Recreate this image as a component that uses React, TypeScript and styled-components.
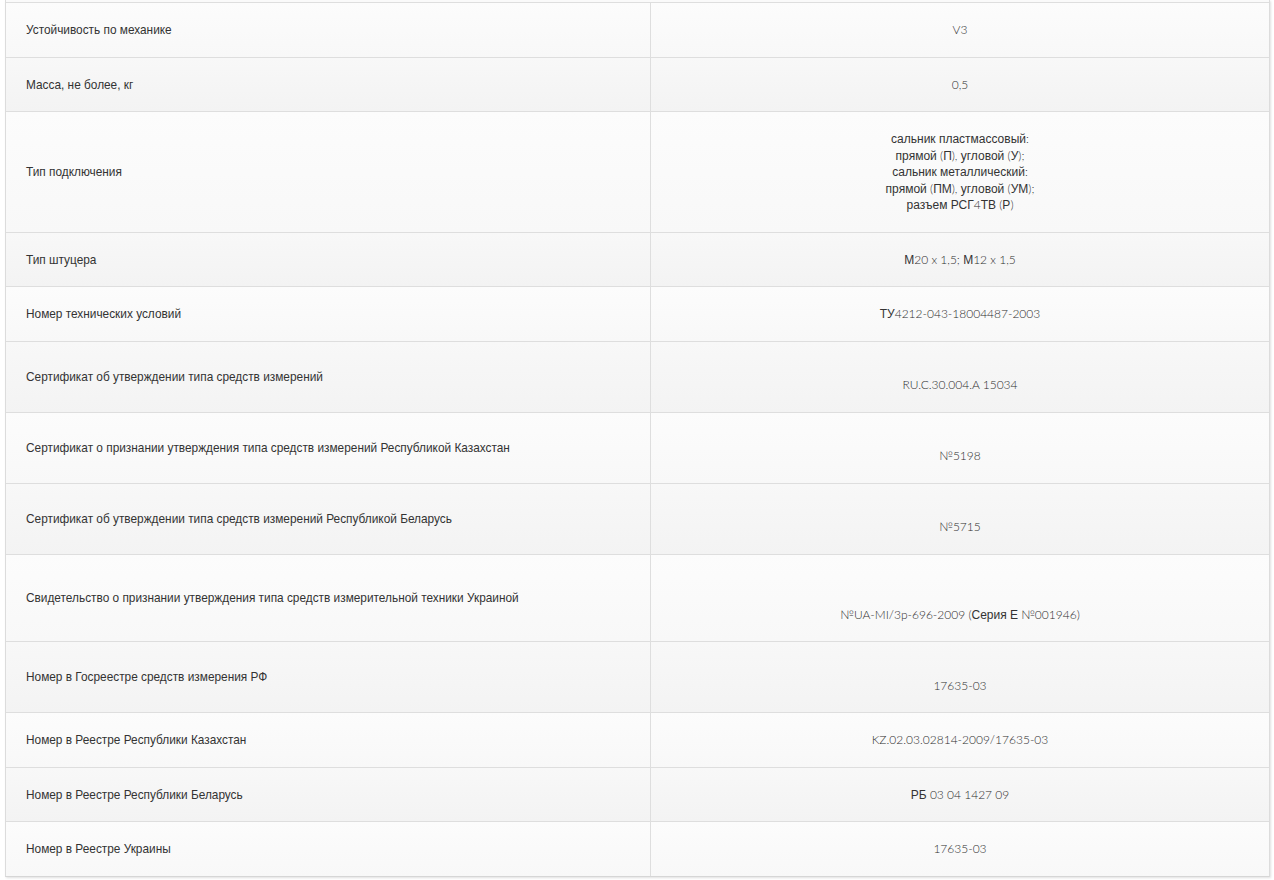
import React from 'react';
import styled, { createGlobalStyle } from 'styled-components';

const GlobalStyle = createGlobalStyle`
    body {
        margin: 0;
        background: #ffffff;
        font-family: Lato, "Liberation Sans", sans-serif;
    }
`

const Page = styled.div`
    padding: 0 4px 4px 5px;
`

const Table = styled.div`
    border-left: 1px solid #dcdcdc;
    border-right: 1px solid #dcdcdc;
    border-bottom: 1px solid #d6d6d6;
    padding-top: 2px;
    background: #fafafa;
    box-shadow: 1px 1px 2px rgba(0, 0, 0, 0.12);
`

const Row = styled.div<{ $alt?: boolean }>`
    display: grid;
    grid-template-columns: 645px 1fr;
    border-top: 1px solid #dedede;
    background: ${p => p.$alt
        ? 'linear-gradient(#f8f8f8, #f3f3f3)'
        : 'linear-gradient(#fcfcfc, #f8f8f8)'};
`

const Label = styled.div`
    display: flex;
    align-items: center;
    padding: 19px 20px 18px 20px;
    border-right: 1px solid #dedede;
    font-family: "Liberation Sans", Arial, sans-serif;
    font-size: 11.85px;
    line-height: 16.5px;
    color: #333333;
`

const Value = styled.div<{ $gap?: number }>`
    display: flex;
    flex-direction: column;
    justify-content: flex-end;
    align-items: center;
    text-align: center;
    padding: ${p => 19 + (p.$gap || 0) * 16.5}px 20px 18px 20px;
    font-family: Lato, "Liberation Sans", sans-serif;
    font-weight: 300;
    font-size: 12px;
    line-height: 16.5px;
    color: #2e2e2e;
`

const Cyr = styled.span`
    font-family: "Liberation Sans", Arial, sans-serif;
    font-weight: 400;
    color: #333333;
`

// cyrillic runs use the Arial-like face, latin and digits stay in Lato
const mixed = (text: string) =>
    text.split(/([А-Яа-яЁё]+)/).map((part, i) =>
        /[А-Яа-яЁё]/.test(part) ? <Cyr key={i}>{part}</Cyr> : part
    );

type Spec = { label: string; value: string[]; gap?: number };

const rows: Spec[] = [
    { label: 'Устойчивость по механике', value: ['V3'] },
    { label: 'Масса, не более, кг', value: ['0,5'] },
    {
        label: 'Тип подключения',
        value: [
            'сальник пластмассовый:',
            'прямой (П), угловой (У);',
            'сальник металлический:',
            'прямой (ПМ), угловой (УМ);',
            'разъем РСГ4ТВ (Р)',
        ],
    },
    { label: 'Тип штуцера', value: ['М20 x 1,5; М12 x 1,5'] },
    { label: 'Номер технических условий', value: ['ТУ4212-043-18004487-2003'] },
    { label: 'Сертификат об утверждении типа средств измерений', value: ['RU.C.30.004.A 15034'], gap: 1 },
    { label: 'Сертификат о признании утверждения типа средств измерений Республикой Казахстан', value: ['№5198'], gap: 1 },
    { label: 'Сертификат об утверждении типа средств измерений Республикой Беларусь', value: ['№5715'], gap: 1 },
    { label: 'Свидетельство о признании утверждения типа средств измерительной техники Украиной', value: ['№UA-MI/3p-696-2009 (Серия Е №001946)'], gap: 2 },
    { label: 'Номер в Госреестре средств измерения РФ', value: ['17635-03'], gap: 1 },
    { label: 'Номер в Реестре Республики Казахстан', value: ['KZ.02.03.02814-2009/17635-03'] },
    { label: 'Номер в Реестре Республики Беларусь', value: ['РБ 03 04 1427 09'] },
    { label: 'Номер в Реестре Украины', value: ['17635-03'] },
];

function App() {
    return (
        <Page>
            <GlobalStyle />
            <Table>
                {rows.map((r, i) => (
                    <Row key={r.label} $alt={i % 2 === 1}>
                        <Label>{r.label}</Label>
                        <Value $gap={r.gap}>
                            {r.value.map(line => <span key={line}>{mixed(line)}</span>)}
                        </Value>
                    </Row>
                ))}
            </Table>
        </Page>
    );
}
export default App;
